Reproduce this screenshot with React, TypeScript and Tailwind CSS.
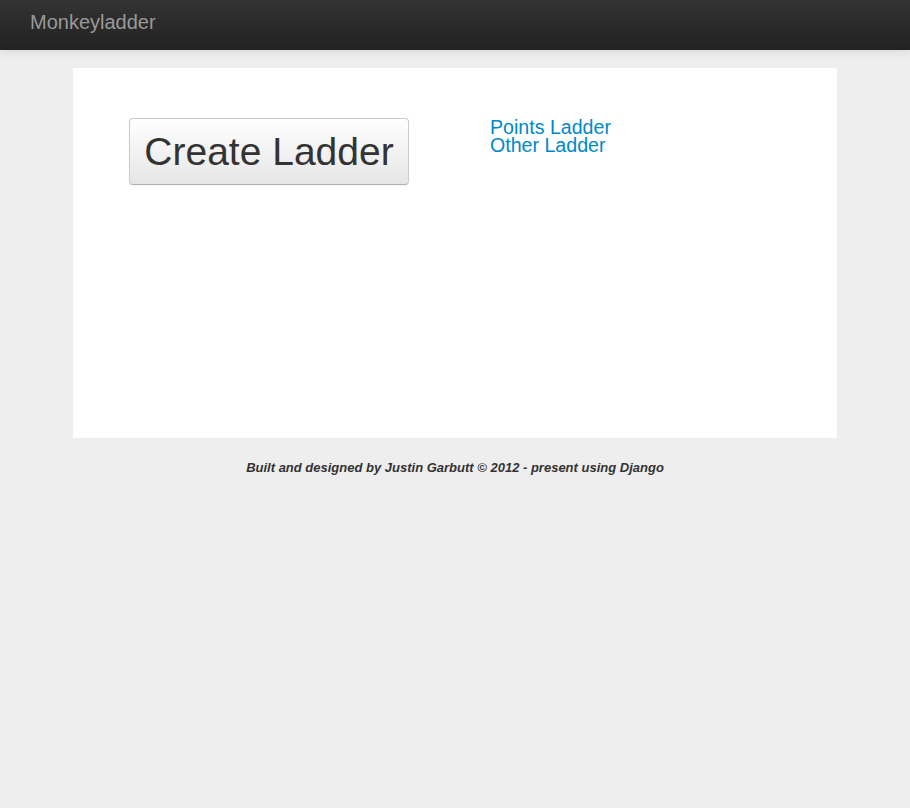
export default function App() {
  return (
    <div
      className="min-h-[808px] bg-[#eeeeee] text-[#333333]"
      style={{ fontFamily: '"Liberation Sans", Arial, sans-serif' }}
    >
      {/* Navbar */}
      <div className="h-[50px] bg-gradient-to-b from-[#333333] to-[#222222] shadow-[0_1px_10px_rgba(0,0,0,0.1)] px-[30px] pt-[12px]">
        <span className="text-[20px] leading-[20px] text-[#999999]">Monkeyladder</span>
      </div>

      {/* Main content */}
      <div className="mx-auto mt-[18px] w-[764px] h-[370px] bg-white pt-[50px] pl-[56px]">
        <div className="flex">
          <div className="w-[361px]">
            <button className="w-[280px] h-[67px] rounded-[4px] border border-[#cccccc] border-b-[#b3b3b3] bg-gradient-to-b from-white to-[#e6e6e6] shadow-[inset_0_1px_0_rgba(255,255,255,0.2),0_1px_2px_rgba(0,0,0,0.05)] text-[39px] leading-[40px] text-[#333333]">
              Create Ladder
            </button>
          </div>
          <div className="flex flex-col text-[19.6px] leading-[18px] text-[#0088cc]">
            <a href="#">Points Ladder</a>
            <a href="#">Other Ladder</a>
          </div>
        </div>
      </div>

      {/* Footer */}
      <div className="pt-[21px] text-center text-[13px] leading-[18px] font-bold italic text-[#333333]">
        Built and designed by Justin Garbutt © 2012 - present using Django
      </div>
    </div>
  )
}
